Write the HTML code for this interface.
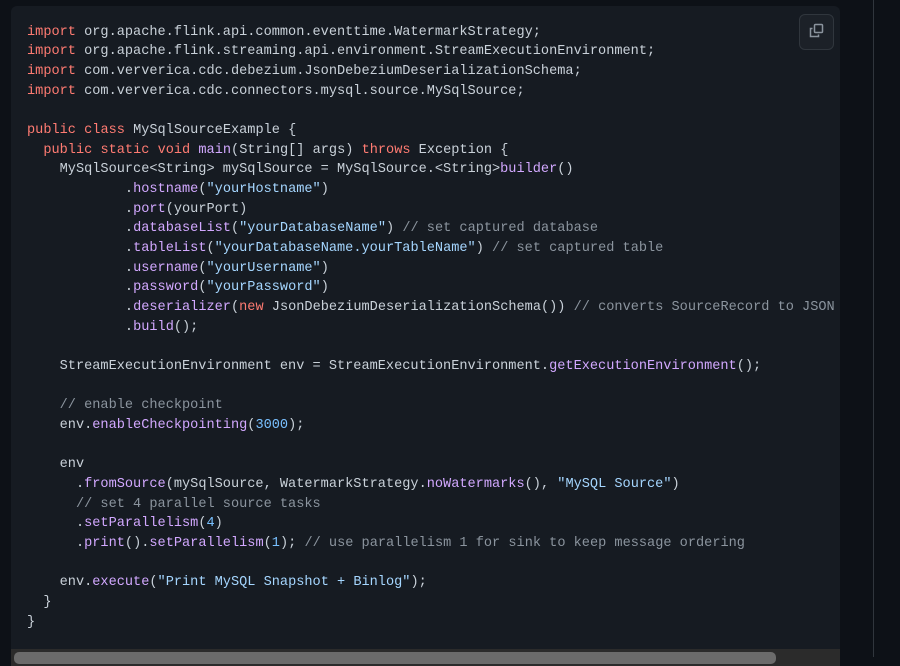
<!DOCTYPE html>
<html><head><meta charset="utf-8"><style>
html,body{margin:0;padding:0;background:#0d1117;width:900px;height:657px;overflow:hidden}
.vline{position:absolute;left:873px;top:0;width:1px;height:657px;background:#30363d}
.block{position:absolute;left:11px;top:6px;width:829px;height:660px;background:#161b22;border-radius:6px 6px 0 0;overflow:hidden}
pre{margin:0;position:absolute;left:16px;top:16.5px;font-family:"Liberation Mono",monospace;font-size:13.6px;line-height:19.67px;color:#c9d1d9;white-space:pre}
.k{color:#ff7b72}.s{color:#a5d6ff}.f{color:#d2a8ff}.c{color:#8b949e}.n{color:#79c0ff}
.copy{position:absolute;left:788px;top:8px;width:33px;height:34px;border:1px solid #30363d;background:#1c2128;border-radius:6px}
.track{position:absolute;left:0;top:643px;width:829px;height:20px;background:#2b2b2b}
.thumb{position:absolute;left:3px;top:646px;width:762px;height:12px;background:#6b6b6b;border-radius:5px}
</style></head><body>
<div class="vline"></div>
<div class="block">
<pre><span class="k">import</span> org.apache.flink.api.common.eventtime.WatermarkStrategy;
<span class="k">import</span> org.apache.flink.streaming.api.environment.StreamExecutionEnvironment;
<span class="k">import</span> com.ververica.cdc.debezium.JsonDebeziumDeserializationSchema;
<span class="k">import</span> com.ververica.cdc.connectors.mysql.source.MySqlSource;

<span class="k">public</span> <span class="k">class</span> MySqlSourceExample {
  <span class="k">public</span> <span class="k">static</span> <span class="k">void</span> <span class="f">main</span>(String[] args) <span class="k">throws</span> Exception {
    MySqlSource&lt;String&gt; mySqlSource = MySqlSource.&lt;String&gt;<span class="f">builder</span>()
            .<span class="f">hostname</span>(<span class="s">"yourHostname"</span>)
            .<span class="f">port</span>(yourPort)
            .<span class="f">databaseList</span>(<span class="s">"yourDatabaseName"</span>) <span class="c">// set captured database</span>
            .<span class="f">tableList</span>(<span class="s">"yourDatabaseName.yourTableName"</span>) <span class="c">// set captured table</span>
            .<span class="f">username</span>(<span class="s">"yourUsername"</span>)
            .<span class="f">password</span>(<span class="s">"yourPassword"</span>)
            .<span class="f">deserializer</span>(<span class="k">new</span> JsonDebeziumDeserializationSchema()) <span class="c">// converts SourceRecord to JSON String</span>
            .<span class="f">build</span>();

    StreamExecutionEnvironment env = StreamExecutionEnvironment.<span class="f">getExecutionEnvironment</span>();

    <span class="c">// enable checkpoint</span>
    env.<span class="f">enableCheckpointing</span>(<span class="n">3000</span>);

    env
      .<span class="f">fromSource</span>(mySqlSource, WatermarkStrategy.<span class="f">noWatermarks</span>(), <span class="s">"MySQL Source"</span>)
      <span class="c">// set 4 parallel source tasks</span>
      .<span class="f">setParallelism</span>(<span class="n">4</span>)
      .<span class="f">print</span>().<span class="f">setParallelism</span>(<span class="n">1</span>); <span class="c">// use parallelism 1 for sink to keep message ordering</span>

    env.<span class="f">execute</span>(<span class="s">"Print MySQL Snapshot + Binlog"</span>);
  }
}</pre>
<div class="copy"><svg width="33" height="34" viewBox="0 0 33 34"><rect x="14.5" y="9.5" width="8" height="8" rx="1" fill="none" stroke="#8b949e" stroke-width="1.5"/><path d="M12.5 13.5 H10.5 V21.5 H18.5 V19.5" fill="none" stroke="#8b949e" stroke-width="1.5"/></svg></div>
<div class="track"></div>
<div class="thumb"></div>
</div>
</body></html>
